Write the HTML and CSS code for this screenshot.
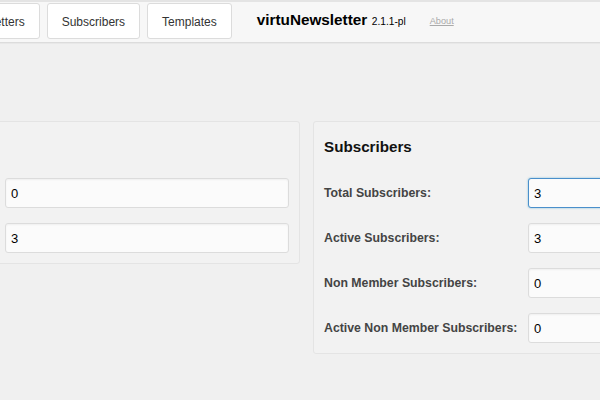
FILE: index.html
```html
<!DOCTYPE html>
<html lang="en">
<head>
  <meta charset="UTF-8">
  <meta name="viewport" content="width=device-width, initial-scale=1.0">
  <title>virtuNewsletter - Statistics</title>
  <link rel="stylesheet" href="styles.css">
</head>
<body>

  <div class="topbar">
    <nav class="tabs">
      <a class="tab" href="#">Newsletters</a>
      <a class="tab" href="#">Subscribers</a>
      <a class="tab" href="#">Templates</a>
    </nav>
    <div class="brand">
      <span class="brand-name">virtuNewsletter</span>
      <span class="brand-version">2.1.1-pl</span>
    </div>
    <a class="about" href="#">About</a>
  </div>

  <div class="stats">
    <div class="card">
      <h2>Newsletters</h2>
      <div class="fields">
        <label for="queued">Queued Newsletters:</label>
        <input id="queued" type="text" value="0" readonly>
        <label for="sent">Sent Newsletters:</label>
        <input id="sent" type="text" value="3" readonly>
      </div>
    </div>

    <div class="card">
      <h2>Subscribers</h2>
      <div class="fields">
        <label for="total">Total Subscribers:</label>
        <input id="total" class="focused" type="text" value="3" readonly>
        <label for="active">Active Subscribers:</label>
        <input id="active" type="text" value="3" readonly>
        <label for="nonmember">Non Member Subscribers:</label>
        <input id="nonmember" type="text" value="0" readonly>
        <label for="activenonmember">Active Non Member Subscribers:</label>
        <input id="activenonmember" type="text" value="0" readonly>
      </div>
    </div>
  </div>

</body>
</html>
```

FILE: styles.css
```css
body {
  margin: 0;
  background-color: #f0f0f0;
  color: #333;
  font-family: "Liberation Sans", Arial, sans-serif;
  overflow: hidden;
}

/* top navigation bar */
.topbar {
  display: flex;
  align-items: flex-start;
  height: 40px;
  background-color: #f7f7f7;
  border-top: 2px solid #e4e4e4;
  border-bottom: 1px solid #dcdcdc;
  box-shadow: 0 1px 0 #e8e8e8;
}
.tabs {
  display: flex;
  gap: 7px;
  margin-left: -53px;
}
.tab {
  margin-top: 1px;
  height: 36px;
  box-sizing: border-box;
  padding: 0 14px;
  line-height: 36px;
  font-size: 12px;
  color: #333;
  text-decoration: none;
  background-color: #fff;
  border: 1px solid #dcdcdc;
  border-radius: 3px;
}
.brand {
  margin: 9px 0 0 25px;
  color: #000;
  white-space: nowrap;
}
.brand-name {
  font-size: 15.3px;
  font-weight: bold;
}
.brand-version {
  font-size: 10.2px;
}
.about {
  margin: 14px 0 0 24px;
  font-size: 9.2px;
  color: #aaa;
}

/* statistics cards */
.stats {
  display: flex;
  gap: 13px;
  margin: 78px 0 0 -210px;
}
.card {
  flex: 0 0 510px;
  box-sizing: border-box;
  align-self: flex-start;
  padding: 14px 10px 10px;
  background-color: #f2f2f2;
  border: 1px solid #e4e4e4;
  border-radius: 3px;
}
.card h2 {
  margin: 0 0 22px;
  padding-top: 1px;
  font-size: 15.2px;
  line-height: 19px;
  color: #111;
}
.fields {
  display: grid;
  grid-template-columns: 204px 284px;
  grid-auto-rows: 30px;
  row-gap: 15px;
  align-items: center;
}
.fields label {
  font-size: 12.3px;
  font-weight: bold;
  color: #444;
}
.fields input {
  height: 30px;
  box-sizing: border-box;
  padding: 0 5px;
  font-family: "Liberation Sans", Arial, sans-serif;
  font-size: 13px;
  color: #000;
  background-color: #fbfbfb;
  border: 1px solid #dcdcdc;
  border-radius: 3px;
  box-shadow: inset 0 1px 2px rgba(0, 0, 0, 0.05);
  outline: none;
}
.fields input.focused {
  border-color: #4a8fcb;
  box-shadow: 0 0 2px rgba(30, 140, 190, 0.6);
}
```
